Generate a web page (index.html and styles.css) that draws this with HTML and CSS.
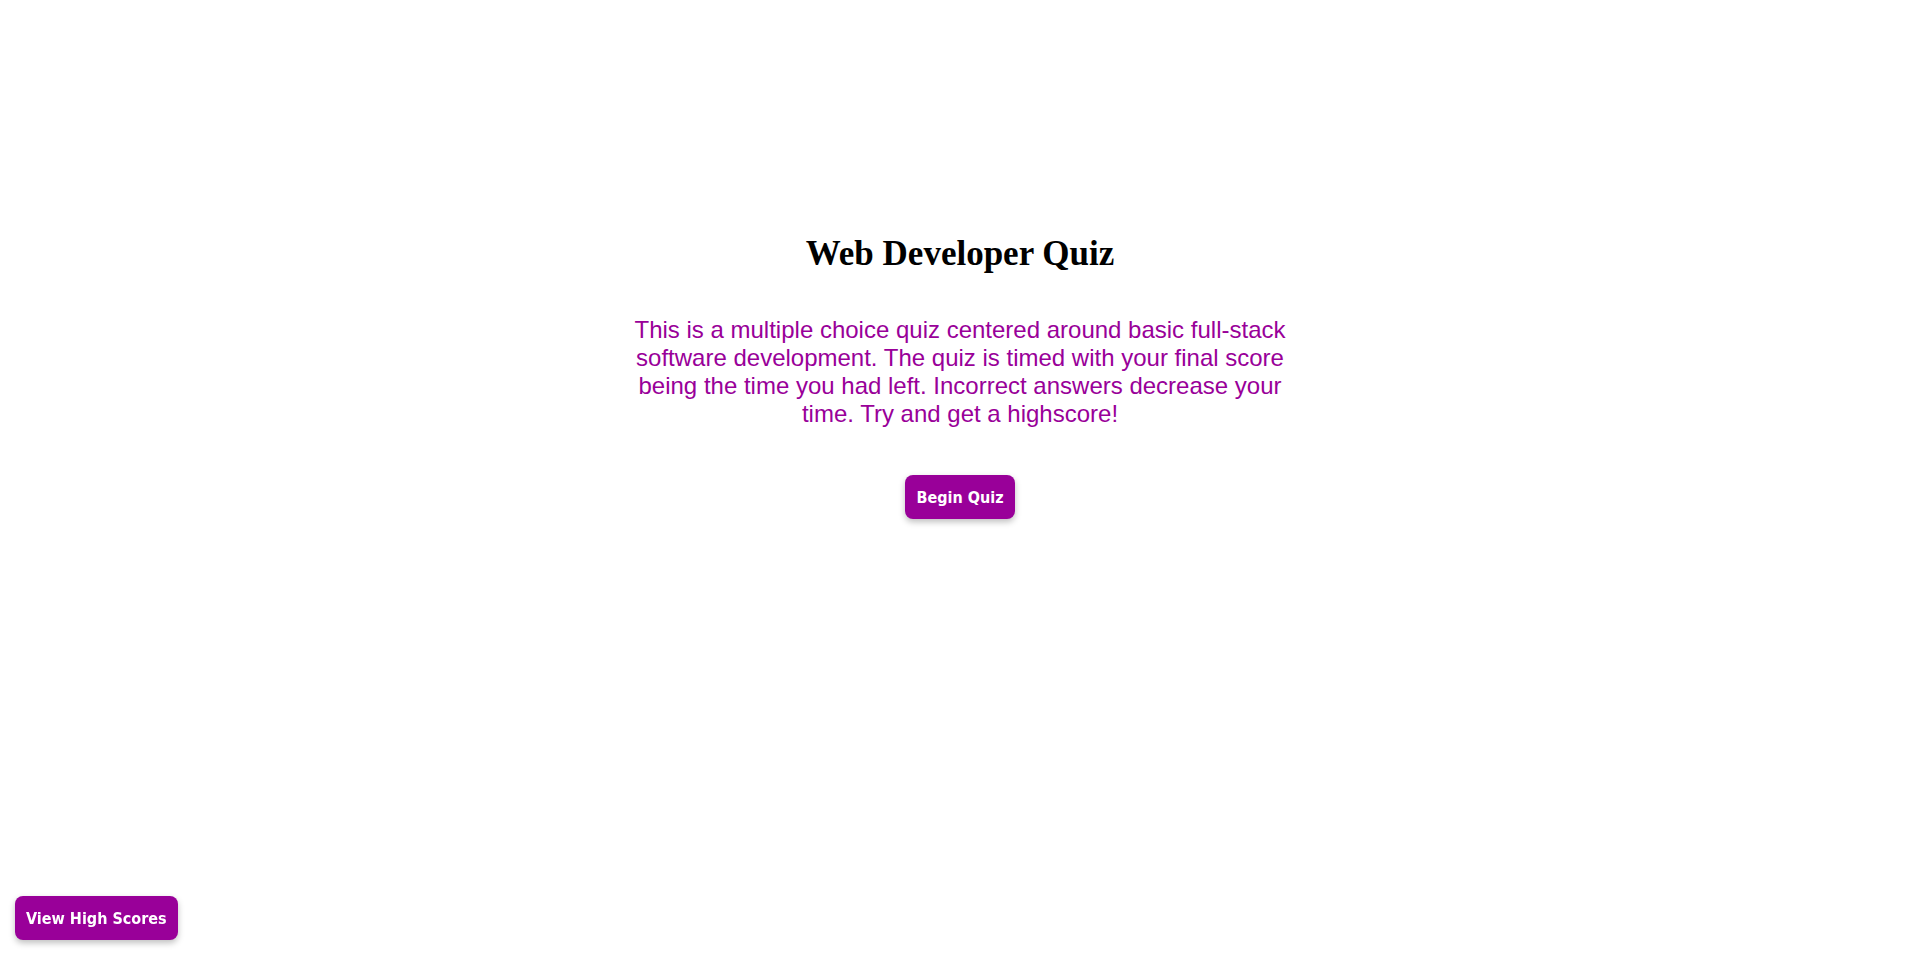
FILE: index.html
```html
<!DOCTYPE html>
<html>
<head>
<meta charset="utf-8">
<link rel="stylesheet" href="styles.css">
</head>
<body>
<main class="start">
  <h1 class="title">Web Developer Quiz</h1>
  <p class="intro">This is a multiple choice quiz centered around basic full-stack software development. The quiz is timed with your final score being the time you had left. Incorrect answers decrease your time. Try and get a highscore!</p>
  <button class="btn">Begin Quiz</button>
</main>
<button class="btn scores">View High Scores</button>
</body>
</html>
```

FILE: styles.css
```css
html, body {
  margin: 0;
  height: 100%;
  background: #ffffff;
}
body {
  font-family: "Liberation Serif", serif;
}
.start {
  width: 660px;
  margin: 0 auto;
  padding-top: 233px;
  display: flex;
  flex-direction: column;
  align-items: center;
  text-align: center;
}
.title {
  margin: 0;
  font-size: 35px;
  font-weight: bold;
  color: #000;
  line-height: 42px;
}
.intro {
  margin: 41px 0 0;
  font-family: "Liberation Sans", Arial, sans-serif;
  font-size: 24px;
  line-height: 28px;
  color: #990099;
}
.btn {
  margin-top: 47px;
  height: 44px;
  padding: 0 11px;
  border: none;
  border-radius: 8px;
  background: #990099;
  color: #ffffff;
  font-family: "DejaVu Sans Condensed", "DejaVu Sans", sans-serif;
  font-weight: bold;
  font-size: 16px;
  box-shadow: 0 3px 6px rgba(0,0,0,0.25);
  cursor: pointer;
}
.scores {
  position: fixed;
  left: 15px;
  bottom: 15px;
  margin: 0;
}
```
